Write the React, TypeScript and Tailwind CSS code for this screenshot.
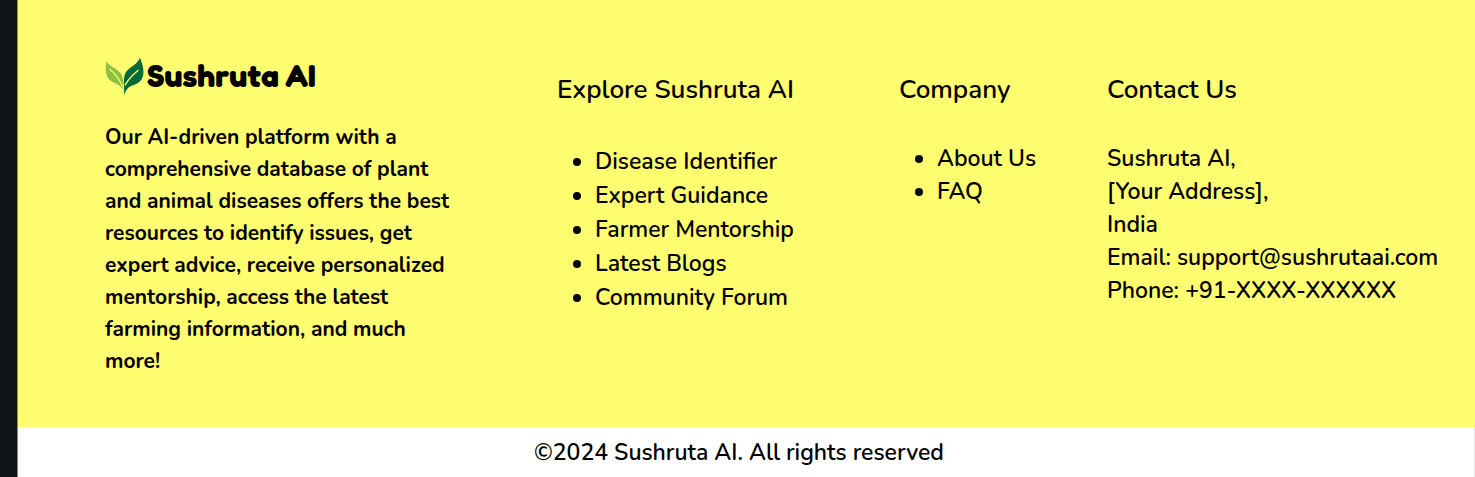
const exploreLinks = [
  "Disease Identifier",
  "Expert Guidance",
  "Farmer Mentorship",
  "Latest Blogs",
  "Community Forum",
];
const companyLinks = ["About Us", "FAQ"];

function Leaves() {
  return (
    <svg viewBox="0 0 40 38" className="h-[38px] w-10 shrink-0" aria-hidden="true">
      <path d="M1.6 4C-0.2 12 0.5 20 5.5 23.5C9 26 14 27 17.6 32C18.8 26 18.5 20 15 15.5C11.5 11 3.5 9.5 1.6 4Z" fill="#8bc040" />
      <path d="M4.5 12C9 15.5 14 20.5 17.5 30" fill="none" stroke="#fffd70" strokeWidth="1.1" />
      <path d="M35 0.5C33.5 7 24 10 20.8 15.5C18.6 19 18.8 25 19 29L19.2 38C20.5 34 22.5 30.5 26 29C32 27 37 25 38.3 17.5C39.2 12 36.8 6 35 0.5Z" fill="#056a39" />
      <path d="M33.5 13C29 17 23.5 21 20 28.5" fill="none" stroke="#fffd70" strokeWidth="1.4" />
    </svg>
  );
}

function LinkList({ items, className }: { items: string[]; className: string }) {
  return (
    <ul className={`list-disc pl-[38px] ${className}`}>
      {items.map((item) => (
        <li key={item}>
          <a href="#">{item}</a>
        </li>
      ))}
    </ul>
  );
}

export default function App() {
  return (
    <div className="flex min-h-screen bg-white font-[Nunito,Lato,sans-serif] font-semibold text-black">
      <div className="w-[17px] shrink-0 bg-[#0d1317]" />
      <footer className="flex grow flex-col border-l border-[#8b8c72]">
        <div className="grid grid-cols-[452fr_342fr_208fr_368fr] bg-[#fffd70] pt-14 pb-[50px] pl-[87px]">
          <section>
            <div className="flex h-10 items-center gap-0.5">
              <Leaves />
              <span className="font-[Fredoka,Nunito,Lato,sans-serif] text-[32px] leading-10 font-bold">Sushruta AI</span>
            </div>
            <p className="mt-[25px] max-w-[356px] text-[21px] leading-8 font-bold">
              Our AI-driven platform with a comprehensive database of plant and animal diseases offers the best
              resources to identify issues, get expert advice, receive personalized mentorship, access the latest
              farming information, and much more!
            </p>
          </section>
          <section className="pt-4">
            <h2 className="text-[26px] leading-9">Explore Sushruta AI</h2>
            <LinkList items={exploreLinks} className="mt-[37px] text-[23px] leading-[34px]" />
          </section>
          <section className="pt-4">
            <h2 className="text-[26px] leading-9">Company</h2>
            <LinkList items={companyLinks} className="mt-[34px] text-[23px] leading-[33px]" />
          </section>
          <section className="pt-4">
            <h2 className="text-[26px] leading-9">Contact Us</h2>
            <address className="mt-[34px] text-[23px] leading-[33px] whitespace-nowrap not-italic">
              Sushruta AI,
              <br />
              [Your Address],
              <br />
              India
              <br />
              Email: <a href="mailto:support@sushrutaai.com">support@sushrutaai.com</a>
              <br />
              Phone: +91-XXXX-XXXXXX
            </address>
          </section>
        </div>
        <p className="grow border-r border-[#e5e5e5] pt-[9px] pr-3.5 pb-2 text-center text-[23px] leading-[34px]">
          ©2024 Sushruta AI. All rights reserved
        </p>
      </footer>
    </div>
  );
}
